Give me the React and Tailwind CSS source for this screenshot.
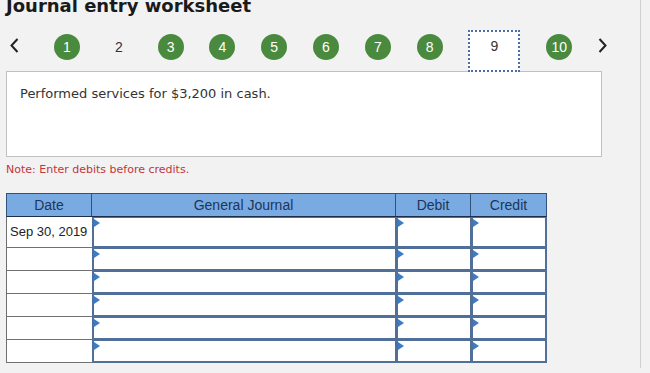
import React from "react";

function Chevron({ dir }) {
  return (
    <svg width="9" height="15" viewBox="0 0 9 15" className="mt-[8px] shrink-0">
      {dir === "left" ? (
        <path d="M7.5 1 L1.5 7.5 L7.5 14" fill="none" stroke="#222" strokeWidth="2" />
      ) : (
        <path d="M1.5 1 L7.5 7.5 L1.5 14" fill="none" stroke="#222" strokeWidth="2" />
      )}
    </svg>
  );
}

function Circle({ n }) {
  return (
    <div className="mt-[4px] w-[26px] h-[26px] rounded-full bg-[#4a8a3e] flex items-center justify-center text-white text-[14px] leading-none font-['Liberation_Sans',Arial,sans-serif]">
      {n}
    </div>
  );
}

function InputCell({ w, last }) {
  return (
    <div
      className={
        "relative h-full bg-white border-[#50709a] border-l-2 border-t border-b-2 " +
        (last ? "border-r-2 " : "border-r ") +
        w
      }
    >
      <div className="absolute top-[1px] left-0 w-0 h-0 border-y-[4px] border-y-transparent border-l-[6px] border-l-[#3b7bc8]" />
    </div>
  );
}

export default function App() {
  const rows = [
    { date: "Sep 30, 2019", h: "h-[31px]" },
    { date: "", h: "h-[23px]" },
    { date: "", h: "h-[23px]" },
    { date: "", h: "h-[23px]" },
    { date: "", h: "h-[23px]" },
    { date: "", h: "h-[23px]" },
  ];
  return (
    <div className="w-[650px] h-[373px] overflow-hidden bg-[#f2f2f2] font-['DejaVu_Sans',Verdana,sans-serif]">
      <div className="w-[641px] h-full border-r border-[#cfcfcf]">
        <div className="mt-[-5px] pl-[6px] text-[18px] leading-[22px] font-bold text-[#1a1a1a] whitespace-nowrap">
          Journal entry worksheet
        </div>

        <div className="mt-[13px] h-[41px] flex items-start pl-[10px]">
          <Chevron dir="left" />
          <div className="ml-[35px] flex items-start gap-[25.8px]">
            <Circle n="1" />
            <div className="mt-[4px] w-[26px] h-[26px] flex items-center justify-center text-[#333] text-[14px] leading-none font-['Liberation_Sans',Arial,sans-serif]">
              2
            </div>
            <Circle n="3" />
            <Circle n="4" />
            <Circle n="5" />
            <Circle n="6" />
            <Circle n="7" />
            <Circle n="8" />
            <div className="relative z-10 w-[52px] h-[42px] border-2 border-dotted border-[#4d6ea3] bg-white flex justify-center pt-[6px] text-[#333] text-[14px] leading-[16px] font-['Liberation_Sans',Arial,sans-serif]">
              9
            </div>
            <Circle n="10" />
          </div>
          <div className="ml-[26px]">
            <Chevron dir="right" />
          </div>
        </div>

        <div className="ml-[6px] w-[596px] h-[86px] border border-[#c0c0c0] bg-white pl-[13px] pt-[14px] text-[13px] leading-[16px] text-[#333]">
          Performed services for $3,200 in cash.
        </div>

        <div className="mt-[6px] pl-[6px] text-[11px] leading-[14px] text-[#c0373a]">
          Note: Enter debits before credits.
        </div>

        <div className="mt-[16px] ml-[6px] w-[541px] font-['Liberation_Sans',Arial,sans-serif]">
          <div className="flex h-[24px] bg-[#7aaae2] border border-[#33527a] border-b-[#1b2f4a] text-[14px] text-[#1c3659]">
            <div className="w-[85px] border-r border-[#33527a] flex items-center justify-center">Date</div>
            <div className="w-[304px] border-r border-[#33527a] flex items-center justify-center">General Journal</div>
            <div className="w-[75px] border-r border-[#33527a] flex items-center justify-center">Debit</div>
            <div className="w-[75px] flex items-center justify-center">Credit</div>
          </div>
          {rows.map((r, i) => (
            <div key={i} className={"flex " + r.h}>
              <div className="w-[86px] h-full bg-white border-l border-b border-[#707070] flex items-center pl-[3px] text-[13px] text-[#222] whitespace-nowrap">
                {r.date}
              </div>
              <InputCell w="w-[304px]" />
              <InputCell w="w-[75px]" />
              <InputCell w="w-[76px]" last />
            </div>
          ))}
        </div>
      </div>
    </div>
  );
}
